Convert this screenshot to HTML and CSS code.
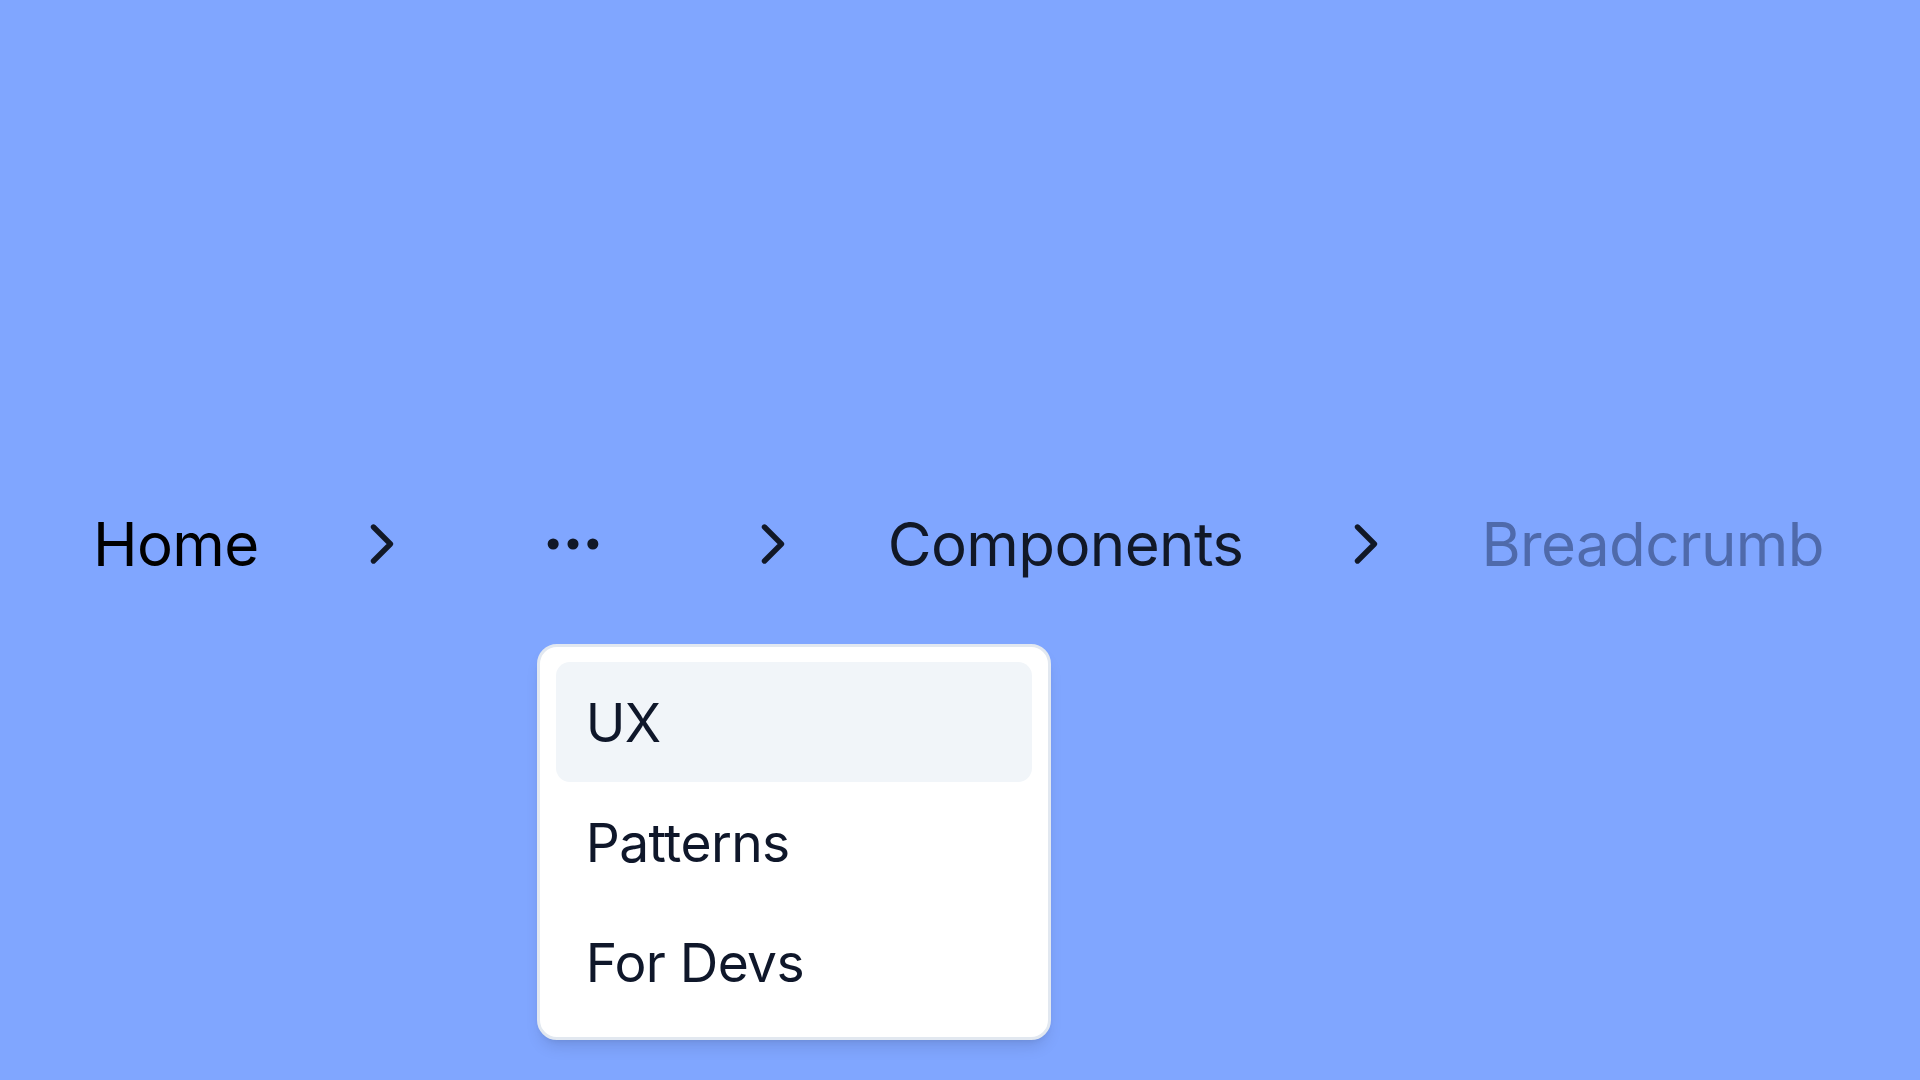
FILE: index.html
```html
<!DOCTYPE html>
<html lang="en">
<head>
<meta charset="utf-8">
<title>Breadcrumb</title>
<link rel="stylesheet" href="styles.css">
</head>
<body>
<main class="page">
  <nav class="breadcrumb" aria-label="breadcrumb">
    <ol class="crumbs">
      <li class="crumb"><a class="crumb-link home" href="#">Home</a></li>
      <li class="sep" aria-hidden="true">
        <svg class="icon" viewBox="0 0 24 24"><path d="M10.4 18l6-6-6-6"/></svg>
      </li>
      <li class="crumb more">
        <button class="more-btn" type="button" aria-label="Toggle menu">
          <svg class="icon" viewBox="0 0 24 24"><circle cx="5" cy="12" r="1"/><circle cx="12" cy="12" r="1"/><circle cx="19" cy="12" r="1"/></svg>
        </button>
        <div class="menu" role="menu">
          <div class="menu-item active" role="menuitem">UX</div>
          <div class="menu-item" role="menuitem">Patterns</div>
          <div class="menu-item" role="menuitem">For Devs</div>
        </div>
      </li>
      <li class="sep" aria-hidden="true">
        <svg class="icon" viewBox="0 0 24 24"><path d="M10.4 18l6-6-6-6"/></svg>
      </li>
      <li class="crumb"><a class="crumb-link" href="#">Components</a></li>
      <li class="sep" aria-hidden="true">
        <svg class="icon" viewBox="0 0 24 24"><path d="M10.4 18l6-6-6-6"/></svg>
      </li>
      <li class="crumb"><span class="crumb-page" aria-current="page">Breadcrumb</span></li>
    </ol>
  </nav>
</main>
</body>
</html>
```

FILE: styles.css
```css
* { box-sizing: border-box; }

html, body {
  margin: 0;
  padding: 0;
}

body {
  background: #80a6ff;
  font-family: Inter, "Noto Sans", "Liberation Sans", sans-serif;
  color: #111827;
  width: 1920px;
  height: 1080px;
  overflow: hidden;
}

.page {
  padding: 508px 0 0 93px;
}

.crumbs {
  list-style: none;
  margin: 0;
  padding: 0;
  display: flex;
  align-items: center;
  gap: 85px;
  font-size: 60px;
  line-height: normal;
  letter-spacing: -0.01em;
}

.crumb {
  display: flex;
  align-items: center;
}

.crumb-link {
  color: #111827;
  text-decoration: none;
}

.crumb-link.home {
  color: #000;
}

.crumb-page {
  color: #4f6aab;
}

.sep {
  display: flex;
  align-items: center;
}

.icon {
  width: 68px;
  height: 68px;
  display: block;
  fill: none;
  stroke: #111827;
  stroke-width: 1.9;
  stroke-linecap: round;
  stroke-linejoin: round;
}

.more {
  position: relative;
}

.more-btn {
  display: flex;
  align-items: center;
  justify-content: center;
  width: 153px;
  height: 68px;
  padding: 0;
  border: 0;
  background: transparent;
  cursor: pointer;
}

.more-btn .icon {
  fill: #111827;
}

.menu {
  position: absolute;
  top: calc(100% + 66px);
  left: 40px;
  width: 514px;
  padding: 15px 16px;
  background: #fff;
  border: 3px solid #e2e8f0;
  border-radius: 20px;
  box-shadow: 0 10px 15px -3px rgba(0, 0, 0, 0.1), 0 4px 6px -4px rgba(0, 0, 0, 0.1);
  font-size: 53.33px;
  color: #0f172a;
}

.menu-item {
  height: 120px;
  display: flex;
  align-items: center;
  padding-left: 30px;
  border-radius: 14px;
}

.menu-item.active {
  background: #f1f5f9;
}
```
